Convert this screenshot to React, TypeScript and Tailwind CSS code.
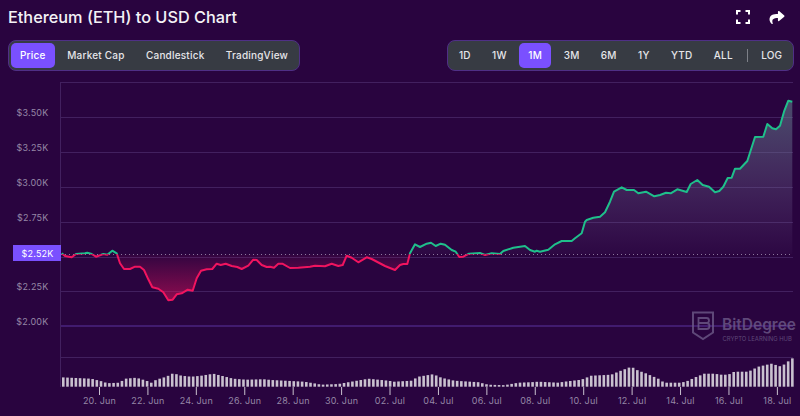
import React from "react";
import { FaShare } from "react-icons/fa";

const linePoints: [number, number][] = [
  [61.7,253.3],[65,256],[71.7,257.3],[76,254],[85,253.3],[87.3,252.7],[91.7,254],[96,256.7],[103.3,254],[107.3,254.7],
  [112.3,250.7],[116.7,253.3],[120,263.3],[124,269],[130,269],[135,266.7],[140,266.7],[144,270],[148.3,279.3],[152.3,287.3],
  [158.3,288.7],[163.3,292.3],[168.3,300.3],[172.7,299.7],[176.7,294.3],[181.7,293.3],[187.7,289.7],[192.7,290.7],[196.7,278.3],[201,270.7],
  [206.7,269.3],[212.3,269],[216.7,263.7],[220.7,265],[225.7,263.7],[231.7,266],[237.3,267],[241.7,269],[248.3,265.7],[253.3,259.7],
  [256.7,260],[261.7,265],[266.7,267],[270,266.7],[274,267.7],[278.3,263.7],[282.3,263.7],[290,268],[298.3,267.7],[310,266.7],
  [315,265.7],[325,266.3],[331.7,263.7],[338.3,266],[342.7,265],[346.7,255.7],[351.7,257.7],[358.3,262.3],[366.7,257.3],[371.7,259],
  [385,266],[395,270],[400,265],[403.3,264],[407.3,264],[410,253.3],[415,244.3],[420,247],[426.7,243.7],[431,242.7],
  [435.7,246],[440.7,243.7],[445,244.7],[451.7,250],[455.7,251.7],[459.3,257],[463.3,256.7],[469,253.7],[480,253],[485,255],
  [491.7,253.3],[500,254],[503.3,251],[513.3,247.7],[525,246],[530,250],[535,251.7],[536.7,250.7],[540,251.7],[548.3,249.7],
  [555,244.3],[561.7,241],[571.7,241],[575,238.3],[581.7,233.3],[585,221.7],[586.7,220],[593.3,217.7],[600,216.7],[605,212.3],
  [610,201.7],[614,191.7],[621.7,187.3],[626.7,190],[634,190],[638.3,193.3],[646,191.7],[654.3,196.3],[660,195],[666,192.7],
  [670.7,193.3],[677.3,189.3],[686.7,192],[690.7,184],[697.3,180],[702.7,185],[709,186.7],[715,192.3],[719.3,191],[723.3,186.7],
  [727.7,178],[731.7,177.7],[735,168.7],[740,168.7],[747.3,161],[755,137],[763.3,136.7],[767.3,124],[772.3,128.3],[776,129.3],
  [780,125.7],[784,111.7],[788.3,100.7],[792.3,101.7],
];

// volume envelope, x position -> bar height
const volumeKeys: [number, number][] = [
  [62,9.3],[90,8],[100,5.5],[106,3.5],[118,4],[124,8],[135,9],[145,6],[150,4],[155,7],[165,10],[172,13.5],[180,11],[190,10],
  [200,11],[212,13],[220,11],[232,8],[245,7],[262,7.5],[270,6.7],[303,5],[315,3],[320,2],[337,2.7],[350,5],[367,8],[387,6],
  [393,5],[410,6],[417,10],[432,12.5],[440,9],[453,6],[477,4.5],[487,2],[503,1.5],[517,4],[530,4.5],[537,5],[557,4],[563,5],
  [580,7],[585,9],[590,11],[610,12],[617,15],[630,20],[637,16],[643,14],[657,8],[663,4],[680,4],[687,6],[693,9],[703,13],
  [713,13],[720,12],[727,12],[733,15],[747,15],[757,20],[770,23],[777,21],[780,20],[785,24],[792,29],
];

const barHeight = (x: number) => {
  for (let i = 1; i < volumeKeys.length; i++) {
    const [x0, h0] = volumeKeys[i - 1];
    const [x1, h1] = volumeKeys[i];
    if (x <= x1) return h0 + ((h1 - h0) * (x - x0)) / (x1 - x0);
  }
  return 29;
};

const bars = Array.from({ length: 175 }, (_, i) => 62 + i * 4.19);
const gridLines = [82, 117, 152, 187, 222, 257, 291, 357];
const yLabels = [
  { text: "$3.50K", y: 112 },
  { text: "$3.25K", y: 147 },
  { text: "$3.00K", y: 182 },
  { text: "$2.75K", y: 217 },
  { text: "$2.25K", y: 286 },
  { text: "$2.00K", y: 321 },
];
const xLabels = ["20. Jun","22. Jun","24. Jun","26. Jun","28. Jun","30. Jun","02. Jul","04. Jul","06. Jul","08. Jul","10. Jul","12. Jul","14. Jul","16. Jul","18. Jul"];

const linePath = linePoints.map((p) => p.join(",")).join(" ");
const areaPath = `61.7,254.3 ${linePath} 792.3,254.3`;

const TabButton = ({ label, active }: { label: string; active?: boolean }) => (
  <div
    className={`flex h-[25px] items-center rounded-[5px] text-[10px] font-medium tracking-[0.2px] ${
      active ? "mx-[2px] bg-[#7a50ff] px-[9px] text-white" : "px-[10.7px] text-[#e6e6ea]"
    }`}
  >
    {label}
  </div>
);

const Chart = () => (
  <svg className="block h-[340px] w-[800px]" viewBox="0 76 800 340" style={{ fontFamily: "Inter, sans-serif" }}>
    <defs>
      <linearGradient id="greenArea" gradientUnits="userSpaceOnUse" x1="0" y1="100" x2="0" y2="254">
        <stop offset="0" stopColor="#5f7f8a" stopOpacity="0.6" />
        <stop offset="1" stopColor="#8a6aa8" stopOpacity="0.04" />
      </linearGradient>
      <linearGradient id="redArea" gradientUnits="userSpaceOnUse" x1="0" y1="254" x2="0" y2="300">
        <stop offset="0" stopColor="#f0145f" stopOpacity="0.04" />
        <stop offset="1" stopColor="#f0145f" stopOpacity="0.5" />
      </linearGradient>
      <clipPath id="aboveBase">
        <rect x="0" y="76" width="800" height="178.3" />
      </clipPath>
      <clipPath id="belowBase">
        <rect x="0" y="254.3" width="800" height="160" />
      </clipPath>
    </defs>

    {gridLines.map((y) => (
      <line key={y} x1="60" x2="793" y1={y + 0.5} y2={y + 0.5} stroke="#42205f" strokeWidth="1" />
    ))}
    <line x1="60" x2="793" y1="326" y2="326" stroke="#4a2380" strokeWidth="1.5" />
    <line x1="60.5" x2="60.5" y1="82" y2="387" stroke="#42205f" strokeWidth="1" />

    <polygon points={areaPath} fill="url(#greenArea)" clipPath="url(#aboveBase)" />
    <polygon points={areaPath} fill="url(#redArea)" clipPath="url(#belowBase)" />
    <line x1="61" x2="793" y1="254.5" y2="254.5" stroke="#8d7a9e" strokeWidth="1" strokeDasharray="1 3" />
    <polyline points={linePath} fill="none" stroke="#1fbf8b" strokeWidth="2" strokeLinejoin="round" clipPath="url(#aboveBase)" />
    <polyline points={linePath} fill="none" stroke="#f0145f" strokeWidth="2" strokeLinejoin="round" clipPath="url(#belowBase)" />

    {bars.map((x) => {
      const h = barHeight(x);
      return <rect key={x} x={x} y={386.7 - h} width="2.6" height={h} fill="#c9c1cf" />;
    })}

    {xLabels.map((label, i) => {
      const x = 99.5 + i * 48.42;
      return (
        <g key={label}>
          <line x1={x} x2={x} y1="387" y2="395" stroke="#c9c1cf" strokeWidth="1" />
          <text x={x} y="403.5" textAnchor="middle" fontSize="9" letterSpacing="0.2" fill="#9587a6">
            {label}
          </text>
        </g>
      );
    })}

    {yLabels.map((l) => (
      <text key={l.text} x="48.5" y={l.y + 3.5} textAnchor="end" fontSize="9" letterSpacing="0.2" fill="#9587a6">
        {l.text}
      </text>
    ))}

    <rect x="13" y="245" width="48" height="16" fill="#7a50ff" />
    <text x="53.5" y="256.5" textAnchor="end" fontSize="9" letterSpacing="0.2" fill="#ffffff">
      $2.52K
    </text>

    {/* watermark */}
    <g opacity="0.8">
      <path d="M693 312.5h20v20l-10 6.5l-10-6.5z" fill="none" stroke="#6d5a88" strokeWidth="2" />
      <path d="M698.5 318h8a2.5 2.5 0 0 1 0 5a2.8 2.8 0 0 1 0 6h-8zM698.5 323h8" fill="none" stroke="#6d5a88" strokeWidth="1.8" />
      <text x="722" y="330" fontSize="15.5" fontWeight="600" fill="#6d5a88">
        BitDegree
      </text>
      <text x="722.5" y="341" fontSize="5.9" fill="#6d5a88">
        CRYPTO LEARNING HUB
      </text>
    </g>
  </svg>
);

const App = () => (
  <div className="h-[416px] w-[800px] overflow-hidden bg-[#29043f]" style={{ fontFamily: "Inter, sans-serif" }}>
    <header className="flex h-[34px] items-center justify-between pl-2 pr-[15px]">
      <h1 className="text-[16.3px] font-medium leading-none text-[#f4f2f6]">Ethereum (ETH) to USD Chart</h1>
      <div className="flex items-center gap-[19px] text-white">
        <svg width="14" height="14" viewBox="0 0 14 14" fill="none" stroke="currentColor" strokeWidth="2">
          <path d="M1 4.5V1h3.5M9.5 1H13v3.5M13 9.5V13H9.5M4.5 13H1V9.5" />
        </svg>
        <FaShare className="h-[15px] w-[16px]" />
      </div>
    </header>

    <div className="mt-[6px] flex items-center justify-between pl-2 pr-[6px]">
      <div className="flex h-[31px] items-center rounded-lg border border-[#4f2f86] bg-[#373b43]">
        <TabButton label="Price" active />
        <TabButton label="Market Cap" />
        <TabButton label="Candlestick" />
        <TabButton label="TradingView" />
      </div>
      <div className="flex h-[31px] items-center rounded-lg border border-[#4f2f86] bg-[#373b43]">
        <TabButton label="1D" />
        <TabButton label="1W" />
        <TabButton label="1M" active />
        <TabButton label="3M" />
        <TabButton label="6M" />
        <TabButton label="1Y" />
        <TabButton label="YTD" />
        <TabButton label="ALL" />
        <div className="mx-[3px] h-[13px] w-px bg-[#7d8088]" />
        <TabButton label="LOG" />
      </div>
    </div>

    <div className="mt-[5px]">
      <Chart />
    </div>
  </div>
);

export default App;
